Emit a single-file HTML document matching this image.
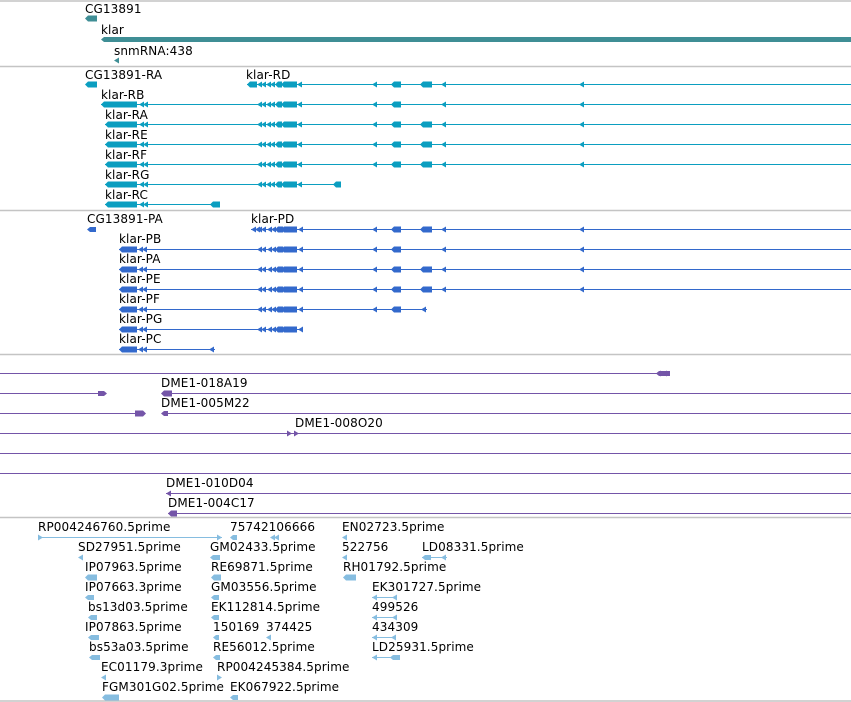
<!DOCTYPE html>
<html><head><meta charset="utf-8">
<style>
html,body{margin:0;padding:0;background:#fff;width:851px;height:702px;overflow:hidden}
svg{display:block}
text{font-family:"DejaVu Sans","Liberation Sans",sans-serif;font-size:12px;fill:#000;letter-spacing:0.1px}
</style></head><body>
<svg id="s" width="851" height="702" xmlns="http://www.w3.org/2000/svg">
<g id="sep" stroke="#c4c4c4" stroke-width="1.5">
<line x1="0" y1="1" x2="851" y2="1"/><line x1="0" y1="66.5" x2="851" y2="66.5"/>
<line x1="0" y1="210.5" x2="851" y2="210.5"/><line x1="0" y1="354.5" x2="851" y2="354.5"/>
<line x1="0" y1="517.5" x2="851" y2="517.5"/><line x1="0" y1="701" x2="851" y2="701"/>
</g>
<g id="shapes"></g>
<text x="85" y="13">CG13891</text>
<text x="101" y="34">klar</text>
<text x="114" y="55">snmRNA:438</text>
<text x="85" y="79">CG13891-RA</text>
<text x="246" y="79">klar-RD</text>
<text x="101" y="99">klar-RB</text>
<text x="105" y="119">klar-RA</text>
<text x="105" y="139">klar-RE</text>
<text x="105" y="159">klar-RF</text>
<text x="105" y="179">klar-RG</text>
<text x="105" y="199">klar-RC</text>
<text x="87" y="223">CG13891-PA</text>
<text x="251" y="223">klar-PD</text>
<text x="119" y="243">klar-PB</text>
<text x="119" y="263">klar-PA</text>
<text x="119" y="283">klar-PE</text>
<text x="119" y="303">klar-PF</text>
<text x="119" y="323">klar-PG</text>
<text x="119" y="343">klar-PC</text>
<text x="161" y="387">DME1-018A19</text>
<text x="161" y="407">DME1-005M22</text>
<text x="295" y="427">DME1-008O20</text>
<text x="166" y="487">DME1-010D04</text>
<text x="168" y="507">DME1-004C17</text>
<text x="38" y="531">RP004246760.5prime</text>
<text x="230" y="531">75742106666</text>
<text x="342" y="531">EN02723.5prime</text>
<text x="78" y="551">SD27951.5prime</text>
<text x="210" y="551">GM02433.5prime</text>
<text x="342" y="551">522756</text>
<text x="422" y="551">LD08331.5prime</text>
<text x="85" y="571">IP07963.5prime</text>
<text x="211" y="571">RE69871.5prime</text>
<text x="343" y="571">RH01792.5prime</text>
<text x="85" y="591">IP07663.3prime</text>
<text x="211" y="591">GM03556.5prime</text>
<text x="372" y="591">EK301727.5prime</text>
<text x="88" y="611">bs13d03.5prime</text>
<text x="211" y="611">EK112814.5prime</text>
<text x="372" y="611">499526</text>
<text x="85" y="631">IP07863.5prime</text>
<text x="213" y="631">150169</text>
<text x="266" y="631">374425</text>
<text x="372" y="631">434309</text>
<text x="89" y="651">bs53a03.5prime</text>
<text x="213" y="651">RE56012.5prime</text>
<text x="372" y="651">LD25931.5prime</text>
<text x="101" y="671">EC01179.3prime</text>
<text x="217" y="671">RP004245384.5prime</text>
<text x="102" y="691">FGM301G02.5prime</text>
<text x="230" y="691">EK067922.5prime</text>
</svg>
<script>
var g=document.getElementById('shapes'),NS='http://www.w3.org/2000/svg';
function add(t,a){var e=document.createElementNS(NS,t);for(var k in a)e.setAttribute(k,a[k]);g.appendChild(e);}
function ln(x1,x2,y,c){add('line',{x1:x1,x2:x2,y1:y+0.5,y2:y+0.5,stroke:c,'stroke-width':1.1});}
function ex(x1,x2,y,c,h){h=h||3;add('polygon',{points:(x1)+','+(y+0.5)+' '+(x1+3)+','+(y+0.5-h)+' '+x2+','+(y+0.5-h)+' '+x2+','+(y+0.5+h)+' '+(x1+3)+','+(y+0.5+h),fill:c});}
function exr(x1,x2,y,c,h){h=h||3;add('polygon',{points:x1+','+(y+0.5-h)+' '+(x2-3)+','+(y+0.5-h)+' '+x2+','+(y+0.5)+' '+(x2-3)+','+(y+0.5+h)+' '+x1+','+(y+0.5+h),fill:c});}
function tl(x,y,c){add('polygon',{points:x+','+(y+0.5)+' '+(x+5)+','+(y-2.5)+' '+(x+5)+','+(y+3.5),fill:c});}
function tr(x,y,c){add('polygon',{points:(x+5)+','+(y+0.5)+' '+x+','+(y-2.5)+' '+x+','+(y+3.5),fill:c});}
var T='#3f8e95';
ex(85,97,18,T);ex(101,851,39,T,2.5);tl(114,60,T);
var C='#0b9ec0';
function grpC(y,st){if(st<257){ex(247,257,y,C);}tl(257,y,C);tl(261,y,C);tl(266,y,C);tl(270,y,C);ex(275,282,y,C);ex(281,297,y,C);tl(297,y,C);}
function tail(y,c,third){tl(372,y,c);ex(391,401,y,c);if(third)ex(420,432,y,c);tl(441,y,c);tl(579,y,c);}
ex(85,97,84,C);
ln(247,851,84,C);grpC(84,247);tail(84,C,1);
var rows=[[104,101,0],[124,105,1],[144,105,1],[164,105,1]];
rows.forEach(function(r){ln(r[1],851,r[0],C);ex(r[1],137,r[0],C);tl(139,r[0],C);tl(143,r[0],C);grpC(r[0],257);tail(r[0],C,r[2]);});
ln(105,340,184,C);ex(105,137,184,C);tl(139,184,C);tl(143,184,C);grpC(184,257);ex(333,341,184,C);
ln(105,220,204,C);ex(105,137,204,C);tl(139,204,C);tl(143,204,C);ex(210,220,204,C);
var B='#3369cc';
function grpB(y,st){if(st<257){tl(251,y,B);tl(255,y,B);}tl(257,y,B);tl(261,y,B);tl(267,y,B);tl(271,y,B);ex(275,283,y,B);ex(281,297,y,B);tl(298,y,B);}
ex(87,96,229,B,2.5);
ln(251,851,229,B);grpB(229,251);tail(229,B,1);
[[249,0],[269,1],[289,1]].forEach(function(r){ln(119,851,r[0],B);ex(119,137,r[0],B);tl(138,r[0],B);tl(142,r[0],B);grpB(r[0],257);tail(r[0],B,r[1]);});
ln(119,427,309,B);ex(119,137,309,B);tl(138,309,B);tl(142,309,B);grpB(309,257);tl(372,309,B);ex(391,401,309,B);tl(421,309,B);
ln(119,303,329,B);ex(119,137,329,B);tl(138,329,B);tl(142,329,B);grpB(329,257);
ln(119,215,349,B);ex(119,137,349,B);tl(138,349,B);tl(142,349,B);tl(209,349,B);
var P='#7455a8';
ln(0,660,373,P);tl(656,373,P);tl(662,373,P);ex(656,670,373,P,2.5);
ln(0,104,393,P);exr(98,107,393,P,2.5);ln(165,851,393,P);ex(161,172,393,P);
ln(0,140,413,P);exr(135,146,413,P);ln(165,851,413,P);ex(161,168,413,P,2.5);
ln(0,851,433,P);tr(287,433,P);tr(294,433,P);
ln(0,851,453,P);ln(0,851,473,P);
ln(166,851,493,P);tl(166,493,P);
ln(168,851,513,P);ex(168,177,513,P);
var L='#86bde0';
ln(38,222,537,L);tr(38,537,L);tr(217,537,L);ex(230,237,537,L,2.5);tl(270,537,L);tl(274,537,L);tl(342,537,L);
tl(78,557,L);ex(210,220,557,L,2.5);tl(342,557,L);ln(422,447,557,L);ex(422,431,557,L,2.5);tl(441,557,L);
ex(85,97,577,L);ex(211,221,577,L);ex(343,356,577,L);
ex(85,94,597,L,2.5);ex(211,219,597,L,2.5);ln(372,397,597,L);tl(372,597,L);tl(392,597,L);
ex(88,97,617,L,2.5);ex(211,219,617,L,2.5);ln(372,397,617,L);tl(372,617,L);tl(392,617,L);
ex(88,99,637,L,2.5);ex(213,219,637,L,2.5);tl(266,637,L);ln(372,396,637,L);tl(372,637,L);tl(391,637,L);
ex(89,100,657,L,2.5);ex(213,220,657,L,2.5);ln(372,400,657,L);tl(372,657,L);ex(390,400,657,L,2.5);
tl(101,677,L);tr(217,677,L);
ex(102,119,697,L);ex(230,238,697,L,2.5);
</script>
</body></html>
